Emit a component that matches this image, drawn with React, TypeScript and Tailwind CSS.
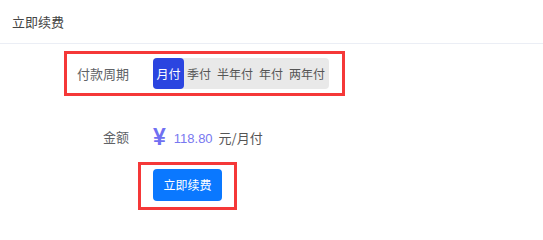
import React from "react";

const periods = ["月付", "季付", "半年付", "年付", "两年付"];

export default function App() {
  return (
    <div
      className="w-[543px] h-[223px] bg-white overflow-hidden"
      style={{ fontFamily: '"Noto Sans CJK SC", "Noto Sans", sans-serif' }}
    >
      <div className="h-[44px] border-b border-[#ebeef5] pl-[12px] flex items-center text-[13px] text-[#444]">
        立即续费
      </div>

      <div className="ml-[64px] mt-[7px] w-[281px] h-[45px] border-[3px] border-[#f53838] flex items-center">
        <div className="w-[62px] text-right text-[13px] text-[#606266]">付款周期</div>
        <div className="ml-[24px] flex h-[31px] bg-[#e9e9e9] rounded-[4px] pr-[1px]">
          {periods.map((p, i) => (
            <div
              key={p}
              className={
                i === 0
                  ? "flex items-center px-[3.5px] text-[12px] text-white bg-[#2b45e0] rounded-[4px]"
                  : "flex items-center px-[3px] text-[12px] text-[#555]"
              }
            >
              {p}
            </div>
          ))}
        </div>
      </div>

      <div className="mt-[29px] h-[24px] pl-[67px] flex items-center">
        <div className="w-[62px] text-right text-[13px] text-[#606266]">金额</div>
        <div className="ml-[24px] flex items-center">
          <span
            className="text-[23px] font-bold text-[#7070f2] leading-none"
            style={{ fontFamily: '"Liberation Sans", Arial, sans-serif' }}
          >
            ¥
          </span>
          <span
            className="ml-[8px] text-[13px] text-[#7878f0] mt-[3px]"
            style={{ fontFamily: '"Liberation Sans", Arial, sans-serif' }}
          >
            118.80
          </span>
          <span className="ml-[6px] text-[13px] text-[#555] mt-[2px]">元/月付</span>
        </div>
      </div>

      <div className="ml-[138px] mt-[13px] w-[99px] border-[3px] border-[#f53838] px-[12px] pt-[4px] pb-[6px]">
        <button className="w-[69px] h-[32px] bg-[#0a78ff] rounded-[4px] text-white text-[12px] flex items-center justify-center">
          立即续费
        </button>
      </div>
    </div>
  );
}
